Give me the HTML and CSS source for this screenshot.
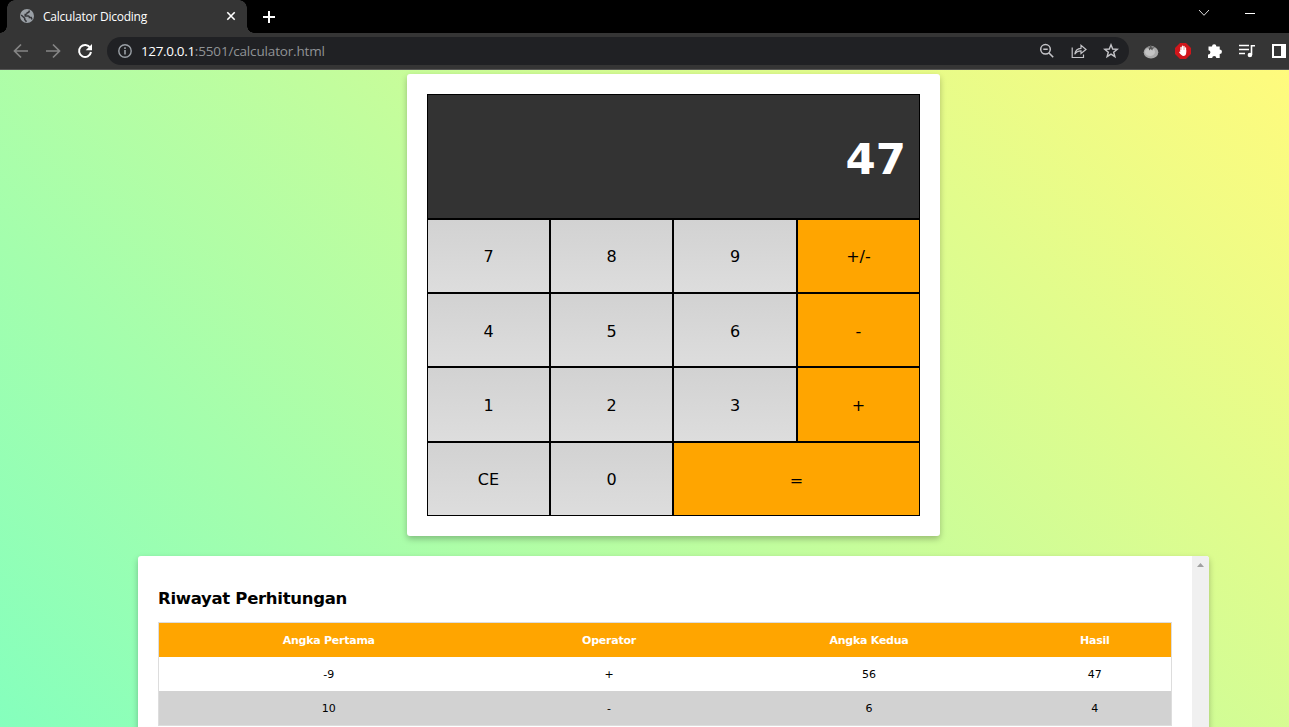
FILE: index.html
```html
<!DOCTYPE html>
<html lang="id">
<head>
<meta charset="utf-8">
<title>Calculator Dicoding</title>
<link rel="stylesheet" href="styles.css">
</head>
<body>
<div class="window">
  <header class="tabstrip">
    <div class="tab">
      <svg class="globe" width="14" height="14" viewBox="0 0 14 14"><circle cx="7" cy="7" r="7" fill="#9aa0a6"/><path d="M9.300 1.500Q9.300 3.600 7.300 3.700Q7.200 5.300 5.200 5.400V6.900H8.500Q9.400 7 9.400 8.500H11.200L12 10.500" fill="none" stroke="#35363a" stroke-width="1.500"/><path d="M1.200 6 4.700 9.300V10.500L6.500 12.800" fill="none" stroke="#35363a" stroke-width="1.500"/></svg>
      <span class="tab-title">Calculator Dicoding</span>
      <svg class="close" width="10" height="10" viewBox="0 0 10 10"><path d="M1.300 1.300 8.700 8.700M8.700 1.300 1.300 8.700" stroke="#fff" stroke-width="1.600"/></svg>
    </div>
    <svg class="plus" width="12" height="12" viewBox="0 0 12 12"><path d="M6 0V12M0 6H12" stroke="#fff" stroke-width="2"/></svg>
    <div class="window-buttons">
      <svg width="12" height="8" viewBox="0 0 12 8"><path d="M1 1 6 6.300 11 1" fill="none" stroke="#ddd"/></svg>
      <svg width="10" height="8" viewBox="0 0 10 8"><path d="M0 4.500H10" stroke="#fff"/></svg>
    </div>
  </header>
  <nav class="toolbar">
    <div class="nav-icons">
      <svg width="16" height="16" viewBox="0 0 16 16"><path d="M15 8H2M8 1.500 1.500 8 8 14.500" fill="none" stroke="#858585" stroke-width="1.700"/></svg>
      <svg width="16" height="16" viewBox="0 0 16 16"><path d="M1 8H14M8 1.500 14.500 8 8 14.500" fill="none" stroke="#858585" stroke-width="1.700"/></svg>
      <svg width="16" height="16" viewBox="0 0 16 16"><path d="M13.200 4.800A6 6 0 1 0 14 9" fill="none" stroke="#fff" stroke-width="2"/><path d="M15 1V7.300H8.700Z" fill="#fff"/></svg>
    </div>
    <div class="address">
      <svg class="info" width="14" height="14" viewBox="0 0 14 14"><circle cx="7" cy="7" r="6.200" fill="none" stroke="#9aa0a6" stroke-width="1.400"/><path d="M7 6V10.600M7 3.300V4.900" stroke="#9aa0a6" stroke-width="1.600"/></svg>
      <span class="url"><b>127.0.0.1</b>:5501/calculator.html</span>
      <div class="address-icons">
        <svg width="16" height="16" viewBox="0 0 16 16"><circle cx="6.500" cy="6.300" r="4.800" fill="none" stroke="#c4c4c8" stroke-width="1.500"/><path d="M4.300 6.300H8.700M10 10 14.200 14.200" stroke="#c4c4c8" stroke-width="1.600"/></svg>
        <svg width="16" height="16" viewBox="0 0 16 16"><path d="M1.200 4.500V14.500H12.500V11.500M3.800 11.300C4.300 7.500 6.500 5.500 10 5.300V2.300L15 6.500 10 10.500V7.800C7.200 7.800 5.200 8.800 3.800 11.300Z" fill="none" stroke="#c4c4c8" stroke-width="1.200"/></svg>
        <svg width="16" height="16" viewBox="0 0 16 16"><path d="M8 1.800 9.700 6 14.200 6.300 10.700 9.200 11.900 13.700 8 11.200 4.100 13.700 5.300 9.200 1.800 6.300 6.300 6Z" fill="none" stroke="#c4c4c8" stroke-width="1.400"/></svg>
      </div>
    </div>
    <div class="extensions">
      <svg width="16" height="16" viewBox="0 0 16 16"><ellipse cx="8" cy="9.300" rx="7.300" ry="6.200" fill="#aaa"/><ellipse cx="7" cy="9" rx="5" ry="4" fill="#c4c4c4"/><path d="M3.500 4.500 6.500 4.800 7.300 2H8.300L8.800 4.600 12 4.300 9.800 5.800 9.300 7.500 7.800 5.900 6 7.500 6 5.600Z" fill="#555"/></svg>
      <svg width="16" height="16" viewBox="0 0 16 16"><path d="M5 0H11L16 5V11L11 16H5L0 11V5Z" fill="#d0161b"/><path d="M6 8V4.500M7.500 8V3.200M9 8V3.400M10.500 9V4.800" stroke="#fff" stroke-width="1.300" stroke-linecap="round"/><path d="M5.300 7H11.200V10Q11 13 8.300 13Q6.800 13 4 9.200L4.700 8.500 5.300 9Z" fill="#fff"/></svg>
      <svg width="16" height="16" viewBox="0 0 16 16"><path d="M1.500 3.500H5A2.200 2.200 0 0 1 9.400 3.500H12.700V6.500A2.200 2.200 0 0 1 12.700 11V15H9.300A2 2 0 0 0 5.200 15H1V11.500A2.100 2.100 0 0 0 1.500 7.200Z" fill="#fff"/></svg>
      <svg width="16" height="16" viewBox="0 0 16 16"><path d="M0 2.500H10M0 6.500H10M0 10.500H6" stroke="#fff" stroke-width="1.600"/><path d="M12.500 12V2.800H16" fill="none" stroke="#fff" stroke-width="1.600"/><circle cx="10.900" cy="12" r="2.300" fill="#fff"/></svg>
      <svg class="side-panel" width="14" height="14" viewBox="0 0 14 14"><path d="M1 1H13V13H1Z" fill="none" stroke="#fff" stroke-width="2"/><path d="M9 0H14V14H9Z" fill="#fff"/></svg>
    </div>
  </nav>
  <main class="page">
    <section class="card calculator">
      <div class="display"><h1 class="display-number">47</h1></div>
      <div class="keys">
        <button class="key edge-row">7</button><button class="key edge-row">8</button><button class="key edge-row">9</button><button class="key operator edge-row">+/-</button>
        <button class="key">4</button><button class="key">5</button><button class="key">6</button><button class="key operator">-</button>
        <button class="key">1</button><button class="key">2</button><button class="key">3</button><button class="key operator">+</button>
        <button class="key edge-row">CE</button><button class="key edge-row">0</button><button class="key operator equals">=</button>
      </div>
    </section>
    <section class="card history">
      <div class="history-body">
        <h2 class="history-title">Riwayat Perhitungan</h2>
        <table class="history-table">
          <colgroup><col class="col-first"><col class="col-operator"><col class="col-second"><col class="col-result"></colgroup>
          <thead><tr><th>Angka Pertama</th><th>Operator</th><th>Angka Kedua</th><th>Hasil</th></tr></thead>
          <tbody>
            <tr><td>-9</td><td>+</td><td>56</td><td>47</td></tr>
            <tr><td>10</td><td>-</td><td>6</td><td>4</td></tr>
          </tbody>
        </table>
      </div>
      <div class="scrollbar"><svg width="7" height="4" viewBox="0 0 7 4"><path d="M0 4 3.500 0 7 4Z" fill="#a0a0a0"/></svg></div>
    </section>
  </main>
</div>
</body>
</html>
```
FILE: styles.css
```css
* { box-sizing: border-box; }
body { margin: 0; font-family: Verdana, "DejaVu Sans", sans-serif; }
svg { display: block; flex: none; }
.window { height: 727px; overflow: hidden; display: flex; flex-direction: column; }
.tabstrip { height: 33px; flex: none; background: #000; display: flex; align-items: center; }
.tab { width: 254px; height: 33px; display: flex; align-items: center; padding: 0 18px 1px 20px; background:
  linear-gradient(#353535, #353535) 15px 0 / 224px 33px no-repeat,
  linear-gradient(#353535, #353535) 7px 8px / 240px 25px no-repeat,
  radial-gradient(circle at 8px 8px, #353535 7.5px, transparent 8px) 7px 0 / 8px 8px no-repeat,
  radial-gradient(circle at 0 8px, #353535 7.5px, transparent 8px) 239px 0 / 8px 8px no-repeat,
  radial-gradient(circle at 0 0, transparent 6.5px, #353535 7px) 0 26px / 7px 7px no-repeat,
  radial-gradient(circle at 7px 0, transparent 6.5px, #353535 7px) 247px 26px / 7px 7px no-repeat; }
.tab-title { flex: 1; margin-left: 9px; font: 12px "Open Sans", sans-serif; color: #fff; letter-spacing: -.24px; }
.plus { margin-left: 9px; }
.window-buttons { margin-left: auto; display: flex; align-items: center; gap: 35px; padding: 0 34px 7px 0; }
.toolbar { height: 37px; flex: none; background: #353535; border-bottom: 1px solid #555; display: flex; align-items: center; padding-left: 13px; }
.nav-icons { display: flex; gap: 16px; }
.address { width: 1022px; height: 28px; margin-left: 14px; border-radius: 14px; background: #202124; display: flex; align-items: center; padding: 0 10px 0 11px; }
.url { margin-left: 9px; font: 13.5px "Open Sans", sans-serif; letter-spacing: -.16px; color: #909396; }
.url b { font-weight: 400; letter-spacing: -.35px; color: #fff; }
.address-icons { margin-left: auto; display: flex; gap: 16px; }
.extensions { margin-left: 14px; display: flex; align-items: center; gap: 16px; }
.side-panel { margin-left: 1px; }
.page { flex: 1; min-height: 0; background: linear-gradient(45deg, #85ffbd 0%, #fffb7d 100%); padding: 4px 0 0 58px; display: flex; flex-direction: column; align-items: center; gap: 20px; }
.card { background: #fff; border-radius: 3px; box-shadow: 0 3px 6px rgba(0, 0, 0, .25); flex: none; }
.calculator { width: 533px; height: 462px; padding: 20px; }
.display { height: 125px; background: #333; border: 1px solid #000; display: flex; align-items: center; justify-content: flex-end; padding: 6px 13px 0 0; }
.display-number { margin: 0; color: #fff; font-size: 43.5px; font-weight: 700; line-height: 1; }
.keys { display: grid; grid-template-columns: 123px 123px 124px 123px; grid-template-rows: 74px 74px 75px 74px; }
.key { font-family: inherit; font-size: 16px; color: #000; padding: 2px 0 0; border: 1px solid #000; background: linear-gradient(to bottom, #d2d2d2, #ddd); }
.edge-row { padding-top: 0; }
.operator { background: orange; }
.equals { grid-column: span 2; }
.history { width: 1071px; height: 300px; display: flex; overflow: hidden; }
.history-body { flex: 1; min-width: 0; padding: 32px 20px 0; }
.history-title { margin: 0 0 12px; font-size: 16.5px; line-height: 22px; letter-spacing: -.3px; }
.history-table { width: 1013px; border-collapse: collapse; table-layout: fixed; border: 1px solid #ddd; font-size: 11px; }
.col-first { width: 340px; }
.col-operator { width: 221px; }
.col-second { width: 299px; }
.col-result { width: 153px; }
.history-table th, .history-table td { height: 34px; padding: 2px 0 0; text-align: center; }
.history-table th { background: orange; color: #fff; letter-spacing: -.25px; padding-top: 1px; }
.history-table tbody tr:nth-child(even) { height: 35px; background: #d2d2d2; }
.scrollbar { width: 17px; flex: none; background: #f0f0f0; display: flex; justify-content: center; padding-top: 7px; }
```
